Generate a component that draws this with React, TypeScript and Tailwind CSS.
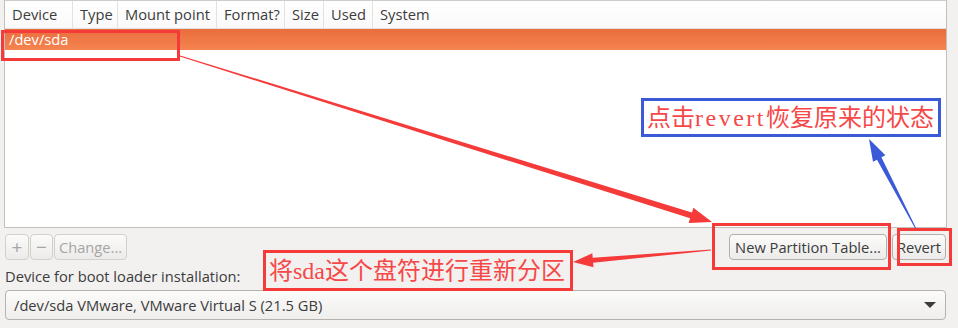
import React from 'react';

const columns = [
  { name: 'Device', w: 'w-[68px]' },
  { name: 'Type', w: 'w-[45px]' },
  { name: 'Mount point', w: 'w-[99px]' },
  { name: 'Format?', w: 'w-[68px]' },
  { name: 'Size', w: 'w-[39px]' },
  { name: 'Used', w: 'w-[49px]' },
  { name: 'System', w: 'flex-1' },
];

const Annotations = () => (
  <div className="absolute inset-0 pointer-events-none">
    <svg width="958" height="328" className="absolute left-0 top-0">
      {/* /dev/sda -> New Partition Table */}
      <polygon
        fill="#f53a3a"
        points="179.8,56.6 690.1,218.3 688.6,223.0 712,222 693.4,207.8 691.9,212.5 180.2,55.4"
      />
      {/* New Partition Table -> note */}
      <polygon
        fill="#f53a3a"
        points="711,249.5 592.7,257.8 592.3,253.3 573,262 593.5,267.3 593.1,262.8 711,250.5"
      />
      {/* Revert -> note */}
      <polygon
        fill="#3a5ad8"
        points="916.4,228.8 881.4,157.3 885.4,155.3 869,139 873.0,161.7 877.0,159.7 915.6,229.2"
      />
    </svg>

    <div className="absolute left-[1px] top-[30px] w-[179px] h-[31px] border-[3px] border-[#f53a3a]" />
    <div className="absolute left-[712px] top-[223px] w-[179px] h-[47px] border-[3px] border-[#f53a3a]" />
    <div className="absolute left-[897px] top-[228px] w-[55px] h-[38px] border-[3px] border-[#f53a3a]" />

    <div className="absolute left-[263px] top-[250px] w-[310px] h-[41px] border-[3px] border-[#f53a3a] flex items-center pl-[3px]">
      <span className="text-[24px] leading-none text-[#f64848] font-['Liberation_Serif','Noto_Sans_CJK_SC',serif]">
        将sda这个盘符进行重新分区
      </span>
    </div>

    <div className="absolute left-[641px] top-[98px] w-[300px] h-[39px] border-[3px] border-[#3a5ad8] bg-white flex items-center pl-[3px]">
      <span className="text-[24px] leading-none text-[#f64848] font-['Liberation_Serif','Noto_Sans_CJK_SC',serif]">
        点击<span className="tracking-[2.5px]">revert</span>恢复原来的状态
      </span>
    </div>
  </div>
);

const Button = ({ label, disabled, w, big }: { label: string; disabled?: boolean; w: string; big?: boolean }) => (
  <button
    className={`h-[26px] ${w} ${big ? 'text-[19px]' : ''} rounded-[4px] border flex items-center justify-center bg-gradient-to-b from-[#fbfbfa] to-[#ecebea] ${
      disabled ? 'border-[#d3d0cc] text-[#a6a6a4]' : 'border-[#b3b0ab] text-[#3c3c3c]'
    }`}
  >
    {label}
  </button>
);

const App = () => {
  return (
    <div className="relative w-[958px] h-[328px] overflow-hidden bg-[#f2f1f0] text-[14.7px] text-[#3c3c3c] font-['Open_Sans','DejaVu_Sans',sans-serif]">
      <div className="flex flex-col">
        {/* partition table */}
        <div className="ml-[4px] w-[943px] h-[228px] border border-t-0 border-[#c3bfba] bg-white flex flex-col">
          <div className="h-[29px] flex border-t border-b border-t-[#cfccc8] border-b-[#e2e0dd] bg-gradient-to-b from-white to-[#f9f9f9]">
            {columns.map((col, i) => (
              <div
                key={i}
                className={`${col.w} flex items-center pl-[7px] ${i < columns.length - 1 ? 'border-r border-[#e4e2df]' : ''}`}
              >
                {col.name}
              </div>
            ))}
          </div>
          <div className="h-[21px] flex items-center pl-[4px] text-white bg-gradient-to-b from-[#ea6d3e] to-[#f5844f]">
            /dev/sda
          </div>
        </div>

        {/* button row */}
        <div className="h-[32px] mt-[6px] flex items-start ml-[5px] mr-[12px]">
          <div className="flex gap-[1px]">
            <Button label="+" disabled big w="w-[24px]" />
            <Button label="−" disabled big w="w-[23px]" />
            <Button label="Change..." disabled w="w-[73px]" />
          </div>
          <div className="ml-auto flex gap-[5px]">
            <Button label="New Partition Table..." w="w-[158px]" />
            <Button label="Revert" w="w-[54px]" />
          </div>
        </div>

        <div className="ml-[5px] h-[20px] flex items-center">Device for boot loader installation:</div>

        <div className="ml-[5px] mt-[4px] w-[941px] h-[30px] rounded-[4px] border border-[#b6b3ae] bg-gradient-to-b from-[#fbfbfa] to-[#efeeed] flex items-center pl-[8px] pr-[9px]">
          <span>/dev/sda VMware, VMware Virtual S (21.5 GB)</span>
          <span className="ml-auto w-0 h-0 border-l-[6px] border-r-[6px] border-t-[6px] border-l-transparent border-r-transparent border-t-[#3c3c3c]" />
        </div>
      </div>

      <Annotations />
    </div>
  );
};

export default App;
